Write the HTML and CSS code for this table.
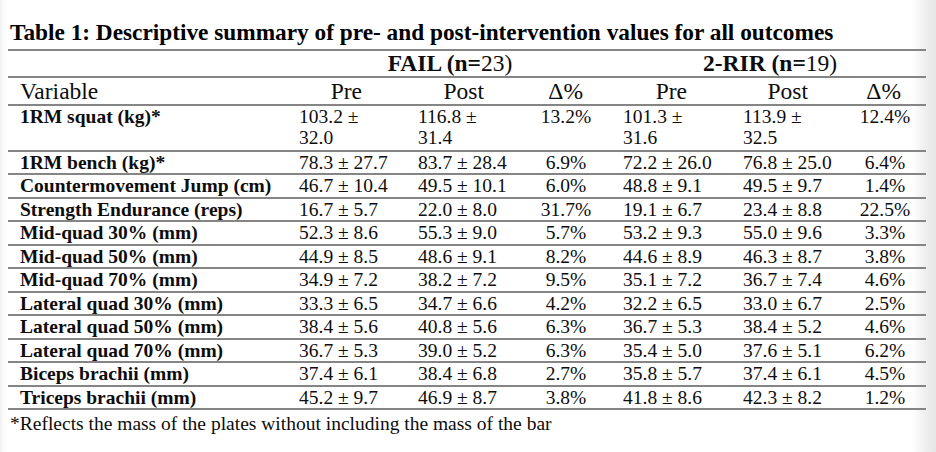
FILE: index.html
```html
<!DOCTYPE html>
<html lang="en">
<head>
<meta charset="utf-8">
<title>Table 1</title>
<link rel="stylesheet" href="styles.css">
</head>
<body>
<div class="page">
  <h1 class="title">Table 1: Descriptive summary of pre- and post-intervention values for all outcomes</h1>
  <table class="summary">
    <colgroup>
      <col class="c-var"><col class="c-pre"><col class="c-post"><col class="c-d1">
      <col class="c-pre2"><col class="c-post2"><col class="c-d2">
    </colgroup>
    <thead>
      <tr class="group-row">
        <th></th>
        <th colspan="3" class="grp grp-fail">FAIL (n=<span class="reg">23)</span></th>
        <th colspan="3" class="grp grp-rir">2-RIR (n=<span class="reg">19)</span></th>
      </tr>
      <tr class="head-row">
        <th class="h-var">Variable</th>
        <th class="h-pp">Pre</th>
        <th class="h-pp">Post</th>
        <th class="h-d1">Δ%</th>
        <th class="h-pp">Pre</th>
        <th class="h-pp2">Post</th>
        <th class="h-d2">Δ%</th>
      </tr>
    </thead>
    <tbody>
      <tr class="tall"><th>1RM squat (kg)*</th><td class="v v1">103.2 ±<br>32.0</td><td class="v">116.8 ±<br>31.4</td><td class="d d1">13.2%</td><td class="v">101.3 ±<br>31.6</td><td class="v">113.9 ±<br>32.5</td><td class="d d2">12.4%</td></tr>
      <tr><th>1RM bench (kg)*</th><td class="v v1">78.3 ± 27.7</td><td class="v">83.7 ± 28.4</td><td class="d d1">6.9%</td><td class="v">72.2 ± 26.0</td><td class="v">76.8 ± 25.0</td><td class="d d2">6.4%</td></tr>
      <tr><th>Countermovement Jump (cm)</th><td class="v v1">46.7 ± 10.4</td><td class="v">49.5 ± 10.1</td><td class="d d1">6.0%</td><td class="v">48.8 ± 9.1</td><td class="v">49.5 ± 9.7</td><td class="d d2">1.4%</td></tr>
      <tr><th>Strength Endurance (reps)</th><td class="v v1">16.7 ± 5.7</td><td class="v">22.0 ± 8.0</td><td class="d d1">31.7%</td><td class="v">19.1 ± 6.7</td><td class="v">23.4 ± 8.8</td><td class="d d2">22.5%</td></tr>
      <tr><th>Mid-quad 30% (mm)</th><td class="v v1">52.3 ± 8.6</td><td class="v">55.3 ± 9.0</td><td class="d d1">5.7%</td><td class="v">53.2 ± 9.3</td><td class="v">55.0 ± 9.6</td><td class="d d2">3.3%</td></tr>
      <tr><th>Mid-quad 50% (mm)</th><td class="v v1">44.9 ± 8.5</td><td class="v">48.6 ± 9.1</td><td class="d d1">8.2%</td><td class="v">44.6 ± 8.9</td><td class="v">46.3 ± 8.7</td><td class="d d2">3.8%</td></tr>
      <tr><th>Mid-quad 70% (mm)</th><td class="v v1">34.9 ± 7.2</td><td class="v">38.2 ± 7.2</td><td class="d d1">9.5%</td><td class="v">35.1 ± 7.2</td><td class="v">36.7 ± 7.4</td><td class="d d2">4.6%</td></tr>
      <tr><th>Lateral quad 30% (mm)</th><td class="v v1">33.3 ± 6.5</td><td class="v">34.7 ± 6.6</td><td class="d d1">4.2%</td><td class="v">32.2 ± 6.5</td><td class="v">33.0 ± 6.7</td><td class="d d2">2.5%</td></tr>
      <tr><th>Lateral quad 50% (mm)</th><td class="v v1">38.4 ± 5.6</td><td class="v">40.8 ± 5.6</td><td class="d d1">6.3%</td><td class="v">36.7 ± 5.3</td><td class="v">38.4 ± 5.2</td><td class="d d2">4.6%</td></tr>
      <tr><th>Lateral quad 70% (mm)</th><td class="v v1">36.7 ± 5.3</td><td class="v">39.0 ± 5.2</td><td class="d d1">6.3%</td><td class="v">35.4 ± 5.0</td><td class="v">37.6 ± 5.1</td><td class="d d2">6.2%</td></tr>
      <tr><th>Biceps brachii (mm)</th><td class="v v1">37.4 ± 6.1</td><td class="v">38.4 ± 6.8</td><td class="d d1">2.7%</td><td class="v">35.8 ± 5.7</td><td class="v">37.4 ± 6.1</td><td class="d d2">4.5%</td></tr>
      <tr><th>Triceps brachii (mm)</th><td class="v v1">45.2 ± 9.7</td><td class="v">46.9 ± 8.7</td><td class="d d1">3.8%</td><td class="v">41.8 ± 8.6</td><td class="v">42.3 ± 8.2</td><td class="d d2">1.2%</td></tr>
    </tbody>
  </table>
  <p class="note">*Reflects the mass of the plates without including the mass of the bar</p>
</div>
</body>
</html>
```

FILE: styles.css
```css
html {
  background: linear-gradient(to right, #f1f1f1 0, #fdfdfd 4px, #ffffff 8px, #ffffff 912px, #ececec 928px, #e6e6e6 936px);
}
body {
  margin: 0;
  font-family: "Liberation Serif", "Times New Roman", serif;
  color: #0d0d0d;
}
.page {
  padding: 20px 10px 0 8px;
}
.title {
  margin: 0;
  padding-left: 2px;
  font-size: 23.3px;
  font-weight: bold;
  line-height: 24px;
  height: 24px;
  color: #000;
  white-space: nowrap;
}
.summary {
  margin-top: 5px;
  width: 918px;
  table-layout: fixed;
  border-collapse: separate;
  border-spacing: 0;
  border-top: 2px solid #858585;
  font-size: 19.5px;
}
.c-var { width: 285px; }
.c-pre { width: 120px; }
.c-post { width: 122px; }
.c-d1 { width: 83px; }
.c-pre2 { width: 120px; }
.c-post2 { width: 118px; }
.c-d2 { width: 70px; }

.summary th,
.summary td {
  padding: 0;
  border-bottom: 2px solid #858585;
  white-space: nowrap;
  vertical-align: top;
}
.summary .group-row th {
  height: 25px;
  font-size: 23.5px;
  line-height: 25px;
  font-weight: bold;
  text-align: center;
}
.summary .group-row .grp-fail { padding-right: 11px; }
.summary .group-row .grp-rir { padding-right: 4px; }
.reg { font-weight: normal; }

.summary .head-row th {
  height: 26px;
  font-size: 23.5px;
  line-height: 26px;
  font-weight: normal;
}
.summary .head-row .h-var { text-align: left; padding-left: 12px; }
.summary .head-row .h-pp { text-align: right; padding-right: 51px; }
.summary .head-row .h-pp2 { text-align: right; padding-right: 48px; }
.summary .head-row .h-d1 { text-align: right; padding-right: 35px; }
.summary .head-row .h-d2 { text-align: right; padding-right: 25px; }

.summary tbody th,
.summary tbody td {
  height: 21.45px;
  line-height: 21.45px;
}
.summary tbody th {
  text-align: left;
  font-weight: bold;
  padding-left: 12px;
}
.summary tbody tr.tall th,
.summary tbody tr.tall td {
  height: 44px;
}
.summary td.v { text-align: left; padding-left: 5px; }
.summary td.v1 { padding-left: 6px; }
.summary td.d { text-align: center; }
.summary td.d1 { padding-right: 21px; }
.summary td.d2 { padding-right: 12px; }

.note {
  margin: 0;
  padding: 2px 0 0 2px;
  font-size: 19.5px;
  line-height: 24px;
}
```
